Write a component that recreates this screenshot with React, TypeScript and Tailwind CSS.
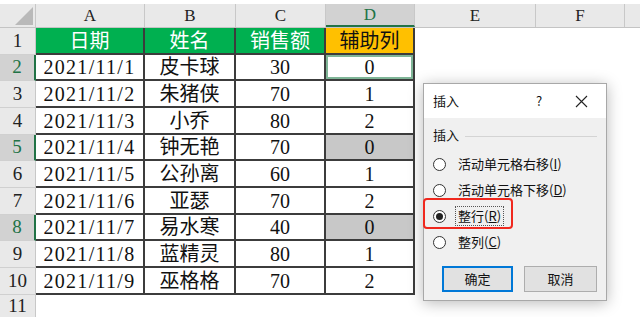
import React from 'react';

const COLS = [
  { key: 'A', w: 'w-[109px]' },
  { key: 'B', w: 'w-[91px]' },
  { key: 'C', w: 'w-[90px]' },
  { key: 'D', w: 'w-[89px]' },
  { key: 'E', w: 'w-[121px]' },
  { key: 'F', w: 'w-[89px]' },
];

const ROWS = [
  { date: '2021/11/1', name: '皮卡球', sales: '30', aux: '0', h: 'h-[26px]' },
  { date: '2021/11/2', name: '朱猪侠', sales: '70', aux: '1', h: 'h-[27px]' },
  { date: '2021/11/3', name: '小乔', sales: '80', aux: '2', h: 'h-[27px]' },
  { date: '2021/11/4', name: '钟无艳', sales: '70', aux: '0', h: 'h-[26px]' },
  { date: '2021/11/5', name: '公孙离', sales: '60', aux: '1', h: 'h-[27px]' },
  { date: '2021/11/6', name: '亚瑟', sales: '70', aux: '2', h: 'h-[27px]' },
  { date: '2021/11/7', name: '易水寒', sales: '40', aux: '0', h: 'h-[26px]' },
  { date: '2021/11/8', name: '蓝精灵', sales: '80', aux: '1', h: 'h-[27px]' },
  { date: '2021/11/9', name: '巫格格', sales: '70', aux: '2', h: 'h-[27px]' },
];

const serif = "font-['Liberation_Serif','Noto_Sans_CJK_SC',serif]";
const ui = "font-['Noto_Sans_CJK_SC','Liberation_Sans',sans-serif]";
const line = 'border-[#3c3c3c]';

const RowHead: React.FC<{ n: number; sel?: boolean; h: string }> = ({ n, sel, h }) => (
  <div
    className={`w-[36px] ${h} shrink-0 flex items-center justify-center text-[19px] border-b border-[#d0d0d0] ${
      sel ? 'bg-[#d2d2d2] text-[#217346] border-r-2 border-r-[#217346]' : 'bg-[#e9e9e9] text-[#222] border-r border-r-[#c8c8c8]'
    }`}
  >
    {n}
  </div>
);

const Radio: React.FC<{ checked?: boolean; label: React.ReactNode; focus?: boolean }> = ({ checked, label, focus }) => (
  <div className="flex items-center h-[26px]">
    <span className="w-[13px] h-[13px] rounded-full border border-[#333] bg-white flex items-center justify-center shrink-0">
      {checked && <span className="w-[7px] h-[7px] rounded-full bg-[#222]" />}
    </span>
    <span
      className={`ml-[9px] text-[13px] text-[#111] leading-[18px] px-[2px] ${
        focus ? 'border border-dotted border-[#555]' : 'border border-transparent'
      }`}
    >
      {label}
    </span>
  </div>
);

const App: React.FC = () => {
  return (
    <div className={`relative w-[640px] h-[317px] overflow-hidden bg-white ${serif}`}>
      <div className="h-[4px] bg-white" />

      {/* column headers */}
      <div className="flex h-[24px] bg-[#e9e9e9] border-b border-[#c4c4c4]">
        <div className="w-[36px] shrink-0 border-r border-[#c8c8c8] relative">
          <svg width="36" height="24" className="absolute inset-0">
            <polygon points="15,21 33,21 33,3" fill="#b9b9b9" />
          </svg>
        </div>
        {COLS.map((c) => (
          <div
            key={c.key}
            className={`${c.w} shrink-0 flex items-center justify-center text-[17px] border-r border-[#c8c8c8] ${
              c.key === 'D' ? 'bg-[#d2d2d2] text-[#217346] border-b-2 border-b-[#217346]' : 'text-[#222]'
            }`}
          >
            {c.key}
          </div>
        ))}
        <div className="flex-1" />
      </div>

      {/* header row */}
      <div className="flex h-[27px]">
        <RowHead n={1} h="h-[27px]" />
        <div className={`w-[109px] shrink-0 bg-[#00b050] text-white text-[20px] flex items-center justify-center border-r-2 border-b-2 ${line}`}>日期</div>
        <div className={`w-[91px] shrink-0 bg-[#00b050] text-white text-[20px] flex items-center justify-center border-r-2 border-b-2 ${line}`}>姓名</div>
        <div className={`w-[90px] shrink-0 bg-[#00b050] text-white text-[20px] flex items-center justify-center border-r-2 border-b-2 ${line}`}>销售额</div>
        <div className={`w-[89px] shrink-0 bg-[#ffc000] text-[#111] text-[20px] flex items-center justify-center border-r-2 border-b-2 ${line}`}>辅助列</div>
      </div>

      {/* data rows */}
      {ROWS.map((r, i) => {
        const sel = i === 0 || i === 3 || i === 6;
        const grey = i === 3 || i === 6;
        return (
          <div key={i} className={`flex ${r.h}`}>
            <RowHead n={i + 2} sel={sel} h={r.h} />
            <div className={`w-[109px] shrink-0 flex items-center justify-center text-[20px] tracking-[1.3px] text-[#111] border-r-2 border-b-2 ${line}`}>
              {r.date}
            </div>
            <div className={`w-[91px] shrink-0 flex items-center justify-center text-[20px] text-[#111] border-r-2 border-b-2 ${line}`}>
              {r.name}
            </div>
            <div className={`w-[90px] shrink-0 flex items-center justify-center text-[20px] text-[#111] border-r-2 border-b-2 ${line}`}>
              {r.sales}
            </div>
            <div className={`w-[89px] shrink-0 border-r-2 border-b-2 ${line} ${grey ? 'bg-[#c8c8c8]' : 'bg-white'}`}>
              <div
                className={`h-full flex items-center justify-center text-[20px] text-[#111] ${
                  i === 0 ? 'border-2 border-[#7fb597]' : ''
                }`}
              >
                {r.aux}
              </div>
            </div>
          </div>
        );
      })}

      {/* row 11 */}
      <div className="flex h-[24px]">
        <RowHead n={11} h="h-[24px]" />
      </div>

      {/* Insert dialog */}
      <div className={`absolute left-[423px] top-[83px] w-[184px] h-[218px] bg-[#f0f0f0] border border-[#a8a8a8] shadow-[0_2px_14px_rgba(0,0,0,0.28)] flex flex-col ${ui}`}>
        <div className="h-[34px] bg-white flex items-center pl-[9px] pr-[14px] text-[13px] text-[#111]">
          <span className="flex-1">插入</span>
          <span className="w-[20px] text-center mr-[26px]">?</span>
          <svg width="13" height="13" viewBox="0 0 13 13" className="mr-[4px]">
            <path d="M1 1 L12 12 M12 1 L1 12" stroke="#222" strokeWidth="1.1" />
          </svg>
        </div>
        <div className="flex-1 px-[9px] pt-[5px]">
          <div className="flex items-center text-[13px] text-[#111] h-[24px]">
            <span>插入</span>
            <span className="flex-1 h-px bg-[#d4d4d4] ml-[6px] mt-[2px]" />
          </div>
          <div className="mt-[4px]">
            <Radio label={<>活动单元格右移(<u>I</u>)</>} />
            <Radio label={<>活动单元格下移(<u>D</u>)</>} />
            <Radio checked focus label={<>整行(<u>R</u>)</>} />
            <Radio label={<>整列(<u>C</u>)</>} />
          </div>
          <div className="flex gap-[11px] mt-[11px] pl-[9px]">
            <button className="w-[73px] h-[26px] bg-[#e1e1e1] border-2 border-[#0078d7] text-[13px] text-[#111]">确定</button>
            <button className="w-[75px] h-[26px] bg-[#e1e1e1] border border-[#adadad] text-[13px] text-[#111]">取消</button>
          </div>
        </div>
      </div>

      {/* red highlight */}
      <div className="absolute left-[423px] top-[198px] w-[90px] h-[31px] border-2 border-[#f0281e] rounded-[4px]" />
    </div>
  );
};

export default App;
